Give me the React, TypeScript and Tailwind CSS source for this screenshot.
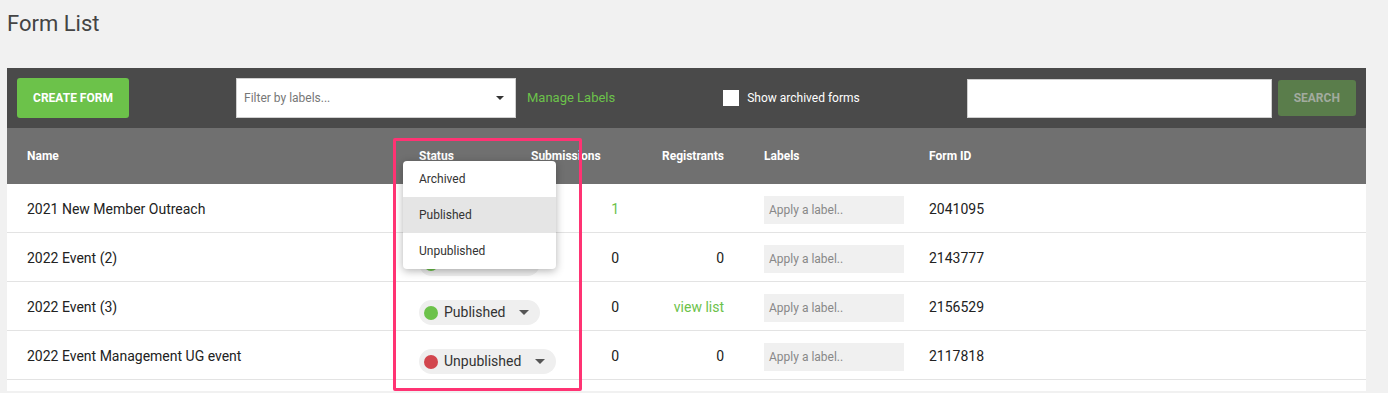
import React from 'react'

type Row = {
  name:        string
  status:      'Published' | 'Unpublished' | null
  submissions: string
  subLink?:    boolean
  registrants: string
  regLink?:    boolean
  formId:      string
}

const rows: Row[] = [
  { name: '2021 New Member Outreach',      status: null,          submissions: '1', subLink: true, registrants: '',          formId: '2041095' },
  { name: '2022 Event (2)',                status: 'Published',   submissions: '0', registrants: '0',                        formId: '2143777' },
  { name: '2022 Event (3)',                status: 'Published',   submissions: '0', registrants: 'view list', regLink: true,  formId: '2156529' },
  { name: '2022 Event Management UG event', status: 'Unpublished', submissions: '0', registrants: '0',                       formId: '2117818' },
]

const grid = 'grid grid-cols-[412px_112px_88px_105px_205px_1fr] items-center'

function Caret({ className }: { className?: string }) {
  return (
    <svg className={className} viewBox="0 0 10 5" fill="currentColor">
      <path d="M0 0h10L5 5z" />
    </svg>
  )
}

function StatusPill({ status }: { status: 'Published' | 'Unpublished' }) {
  const dot = status === 'Published' ? 'bg-[#6cc24a]' : 'bg-[#d2464e]'
  return (
    <div className="mt-[11px] inline-flex items-center h-[25px] rounded-full bg-[#efefef] pl-[5px] pr-[11px] whitespace-nowrap">
      <span className={`w-[14px] h-[14px] rounded-full ${dot}`} />
      <span className="ml-[6px] text-[14px] text-[#333]">{status}</span>
      <Caret className="ml-[14px] w-[10px] h-[5px] text-[#555]" />
    </div>
  )
}

export default function App() {
  return (
    <div className="min-h-[393px] bg-[#f1f1f1] font-['Roboto',sans-serif] pt-[11px] pr-[22px] pl-[7px]">
      <h1 className="text-[22px] leading-[26px] text-[#444]">Form List</h1>

      <div className="mt-[31px] relative">
        {/* toolbar */}
        <div className="h-[60px] bg-[#4a4a4a] flex items-center pl-[10px]">
          <button className="w-[112px] h-[40px] rounded-[3px] bg-[#6cc24a] text-white text-[12px] font-bold uppercase">
            Create Form
          </button>
          <div className="ml-[107px] w-[280px] h-[40px] bg-white border border-[#d0d0d0] flex items-center px-[7px]">
            <span className="flex-1 text-[12px] text-[#777]">Filter by labels...</span>
            <Caret className="w-[8px] h-[4px] text-[#333] mr-[4px]" />
          </div>
          <a className="ml-[11px] text-[13px] text-[#6cc24a]">Manage Labels</a>
          <div className="ml-[108px] flex items-center">
            <span className="w-[16px] h-[16px] bg-white" />
            <span className="ml-[8px] text-[12px] text-white">Show archived forms</span>
          </div>
          <div className="ml-[107px] w-[305px] h-[39px] bg-white border border-[#cfcfcf]" />
          <button className="ml-[6px] w-[78px] h-[36px] rounded-[3px] bg-[#5a7d4b] text-[#a2ab9f] text-[12px] font-bold uppercase">
            Search
          </button>
        </div>

        {/* header */}
        <div className={`${grid} h-[56px] bg-[#707070] text-white text-[12px] font-bold`}>
          <div className="pl-[20px]">Name</div>
          <div>Status</div>
          <div>Submissions</div>
          <div className="text-right">Registrants</div>
          <div className="pl-[40px]">Labels</div>
          <div>Form ID</div>
        </div>

        {/* rows */}
        <div className="bg-white pb-[11px]">
          {rows.map((r) => (
            <div key={r.formId} className={`${grid} h-[49px] pt-[3px] border-b border-[#e3e3e3] text-[14px] text-[#222]`}>
              <div className="pl-[20px]">{r.name}</div>
              <div>{r.status && <StatusPill status={r.status} />}</div>
              <div className={`text-right ${r.subLink ? 'text-[#6cc24a]' : ''}`}>{r.submissions}</div>
              <div className={`text-right ${r.regLink ? 'text-[#6cc24a]' : ''}`}>{r.registrants}</div>
              <div className="pl-[40px]">
                <div className="w-[140px] h-[28px] bg-[#f0f0f0] flex items-center px-[5px] text-[12px] text-[#888]">
                  Apply a label..
                </div>
              </div>
              <div>{r.formId}</div>
            </div>
          ))}
        </div>

        {/* open status menu */}
        <div className="absolute left-[396px] top-[93px] w-[153px] bg-white rounded-[4px] shadow-[0_2px_8px_rgba(0,0,0,0.3)] text-[12px] text-[#333]">
          <div className="h-[36px] flex items-center pl-[16px]">Archived</div>
          <div className="h-[36px] flex items-center pl-[16px] bg-[#e5e5e5]">Published</div>
          <div className="h-[36px] flex items-center pl-[16px]">Unpublished</div>
        </div>

        {/* highlight box */}
        <div className="absolute left-[386px] top-[70px] w-[189px] h-[253px] border-[3px] border-[#ff3373] rounded-[2px] pointer-events-none" />
      </div>
    </div>
  )
}
